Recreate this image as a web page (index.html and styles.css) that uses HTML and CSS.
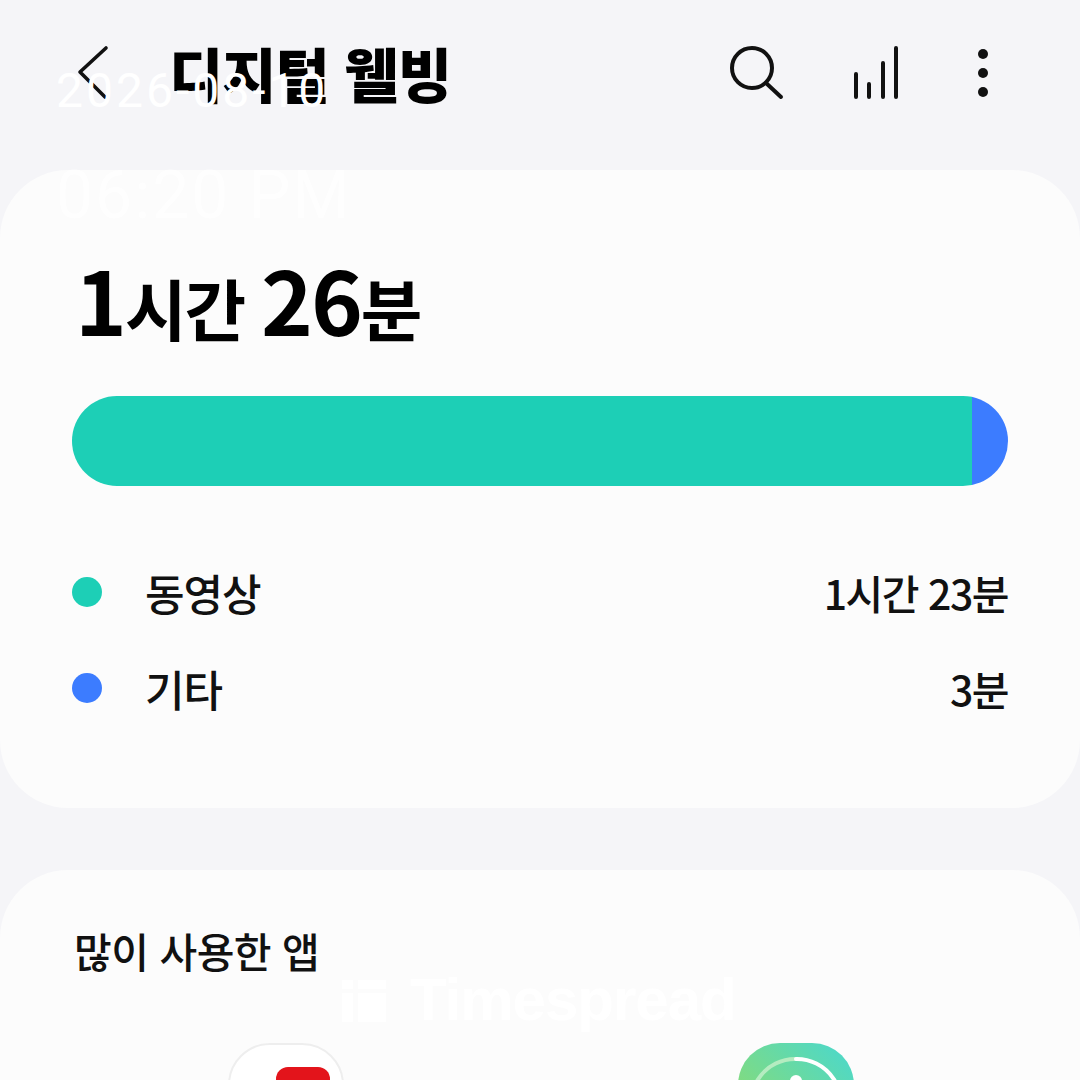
FILE: index.html
```html
<!DOCTYPE html>
<html lang="ko">
<head>
    <meta charset="UTF-8">
    <meta name="viewport" content="width=device-width, initial-scale=1.0">
    <title>디지털 웰빙</title>
    <link rel="stylesheet" href="styles.css">
</head>
<body>
    <div class="screen">
        <header class="top-bar">
            <svg class="back-icon" width="40" height="60" viewBox="0 0 40 60">
                <path d="M34 3 L8 27 L33 52" fill="none" stroke="#111" stroke-width="3.6" stroke-linecap="round" stroke-linejoin="round"/>
            </svg>
            <h1 class="title">디지털 웰빙</h1>
            <div class="actions">
                <svg class="search-icon" width="56" height="56" viewBox="0 0 56 56">
                    <circle cx="22" cy="22" r="20" fill="none" stroke="#111" stroke-width="4"/>
                    <path d="M36 37 L51 51" stroke="#111" stroke-width="4" stroke-linecap="round"/>
                </svg>
                <svg class="chart-icon" width="50" height="56" viewBox="0 0 50 56">
                    <path d="M6 28 V51 M19 38 V51 M33 17 V51 M46 2 V51" stroke="#111" stroke-width="4" stroke-linecap="round"/>
                </svg>
                <svg class="more-icon" width="14" height="56" viewBox="0 0 14 56">
                    <circle cx="7" cy="8" r="5" fill="#111"/>
                    <circle cx="7" cy="27" r="5" fill="#111"/>
                    <circle cx="7" cy="46" r="5" fill="#111"/>
                </svg>
            </div>
        </header>

        <section class="card usage-card">
            <div class="total"><b>1</b>시간 <b>26</b>분</div>
            <div class="bar">
                <div class="bar-video"></div>
                <div class="bar-other"></div>
            </div>
            <ul class="legend">
                <li class="legend-row">
                    <span class="dot dot-video"></span>
                    <span class="legend-name">동영상</span>
                    <span class="legend-time">1시간 23분</span>
                </li>
                <li class="legend-row">
                    <span class="dot dot-other"></span>
                    <span class="legend-name">기타</span>
                    <span class="legend-time">3분</span>
                </li>
            </ul>
        </section>

        <section class="card apps-card">
            <h2 class="apps-title">많이 사용한 앱</h2>
            <div class="apps">
                <div class="app-icon app-youtube"><span class="yt-play"></span></div>
                <div class="app-icon app-wellbeing">
                    <svg width="116" height="116" viewBox="0 0 116 116">
                        <path d="M18 80 A44 44 0 0 1 58 16" fill="none" stroke="#b5ecc0" stroke-width="4"/>
                        <path d="M58 16 A44 44 0 0 1 98 80" fill="none" stroke="#fff" stroke-width="4" stroke-linecap="round"/>
                        <circle cx="58" cy="38" r="6" fill="#fff"/>
                    </svg>
                </div>
            </div>
        </section>
    </div>

    <div class="stamp stamp-date">2026-08-10</div>
    <div class="stamp stamp-time">06:20 PM</div>
    <div class="stamp-brand">
        <svg width="44" height="44" viewBox="0 0 44 44">
            <path d="M0 2 H11 V11 H0 Z M16 2 H44 V11 H16 Z M0 15 H11 V44 H0 Z M16 15 H44 V44 H16 Z" fill="#fff"/>
        </svg>
        <span>Timespread</span>
    </div>
</body>
</html>
```
FILE: styles.css
```css
* {
    box-sizing: border-box;
}
html, body {
    margin: 0;
    padding: 0;
}
body {
    width: 1080px;
    height: 1080px;
    overflow: hidden;
    position: relative;
    background-color: #f5f5f8;
    color: #111;
    font-family: "Noto Sans CJK KR", "Noto Sans", sans-serif;
}
.top-bar {
    height: 170px;
    display: flex;
    align-items: flex-start;
    padding: 42px 90px 0 72px;
}
.back-icon {
    margin-top: 3px;
}
.title {
    margin: -9px 0 0 57px;
    font-size: 59px;
    font-weight: 900;
    line-height: 80px;
    color: #000;
    letter-spacing: -1px;
}
.actions {
    margin-left: auto;
    display: flex;
    align-items: flex-start;
    padding-top: 4px;
}
.chart-icon {
    margin-left: 64px;
    margin-right: 76px;
}
.card {
    background-color: #fcfcfc;
    border-radius: 68px;
}
.usage-card {
    height: 638px;
    padding: 78px 72px 0;
}
.total {
    padding-left: 3px;
    font-size: 67px;
    font-weight: 700;
    line-height: 100px;
    letter-spacing: -2px;
    color: #000;
}
.total b {
    font-size: 88px;
    font-weight: 700;
}
.bar {
    margin-top: 39px;
    height: 90px;
    border-radius: 45px;
    overflow: hidden;
    display: flex;
}
.bar-video {
    width: 900px;
    background-color: #1dcfb6;
}
.bar-other {
    flex: 1;
    background-color: #3c7cff;
}
.legend {
    list-style: none;
    margin: 82px 0 0;
    padding: 0;
    display: flex;
    flex-direction: column;
    gap: 48px;
}
.legend-row {
    height: 48px;
    display: flex;
    align-items: center;
    font-size: 43px;
    line-height: 48px;
    font-weight: 500;
}
.dot {
    width: 30px;
    height: 30px;
    border-radius: 50%;
    margin-right: 43px;
}
.dot-video {
    background-color: #1dcfb6;
}
.dot-other {
    background-color: #3c7cff;
}
.legend-name {
    letter-spacing: -1px;
}
.legend-time {
    margin-left: auto;
    font-size: 41px;
    letter-spacing: -1.5px;
}
.apps-card {
    margin-top: 62px;
    height: 210px;
    padding: 52px 74px 0;
    overflow: hidden;
    border-radius: 68px 68px 0 0;
}
.apps-title {
    margin: 0;
    font-size: 41px;
    font-weight: 500;
    line-height: 56px;
    letter-spacing: -0.5px;
}
.apps {
    margin-top: 65px;
    display: flex;
    padding-left: 154px;
    gap: 394px;
}
.app-icon {
    flex: none;
    width: 116px;
    height: 116px;
    border-radius: 42px;
    position: relative;
}
.app-youtube {
    background-color: #fff;
    border: 2px solid #eeeeee;
}
.yt-play {
    position: absolute;
    left: 46px;
    top: 22px;
    width: 54px;
    height: 40px;
    border-radius: 12px;
    background-color: #e3141b;
}
.app-wellbeing {
    background: linear-gradient(225deg, #48d8d0, #9bdc5c);
}
/* overlay stamps */
.stamp {
    position: absolute;
    left: 56px;
    color: #fff;
    font-family: Roboto, "Liberation Sans", sans-serif;
    font-weight: 400;
    font-size: 48px;
    line-height: 56px;
    letter-spacing: 3px;
    white-space: nowrap;
}
.stamp-date {
    top: 63px;
}
.stamp-time {
    top: 166px;
    opacity: 0.75;
    font-size: 66px;
    line-height: 60px;
    letter-spacing: 2px;
}
.stamp-brand {
    position: absolute;
    left: 342px;
    top: 978px;
    display: flex;
    align-items: center;
    gap: 24px;
    color: #fff;
    font-family: "Liberation Sans", sans-serif;
    font-size: 60px;
    font-weight: 700;
    line-height: 44px;
    letter-spacing: -1px;
}
```
